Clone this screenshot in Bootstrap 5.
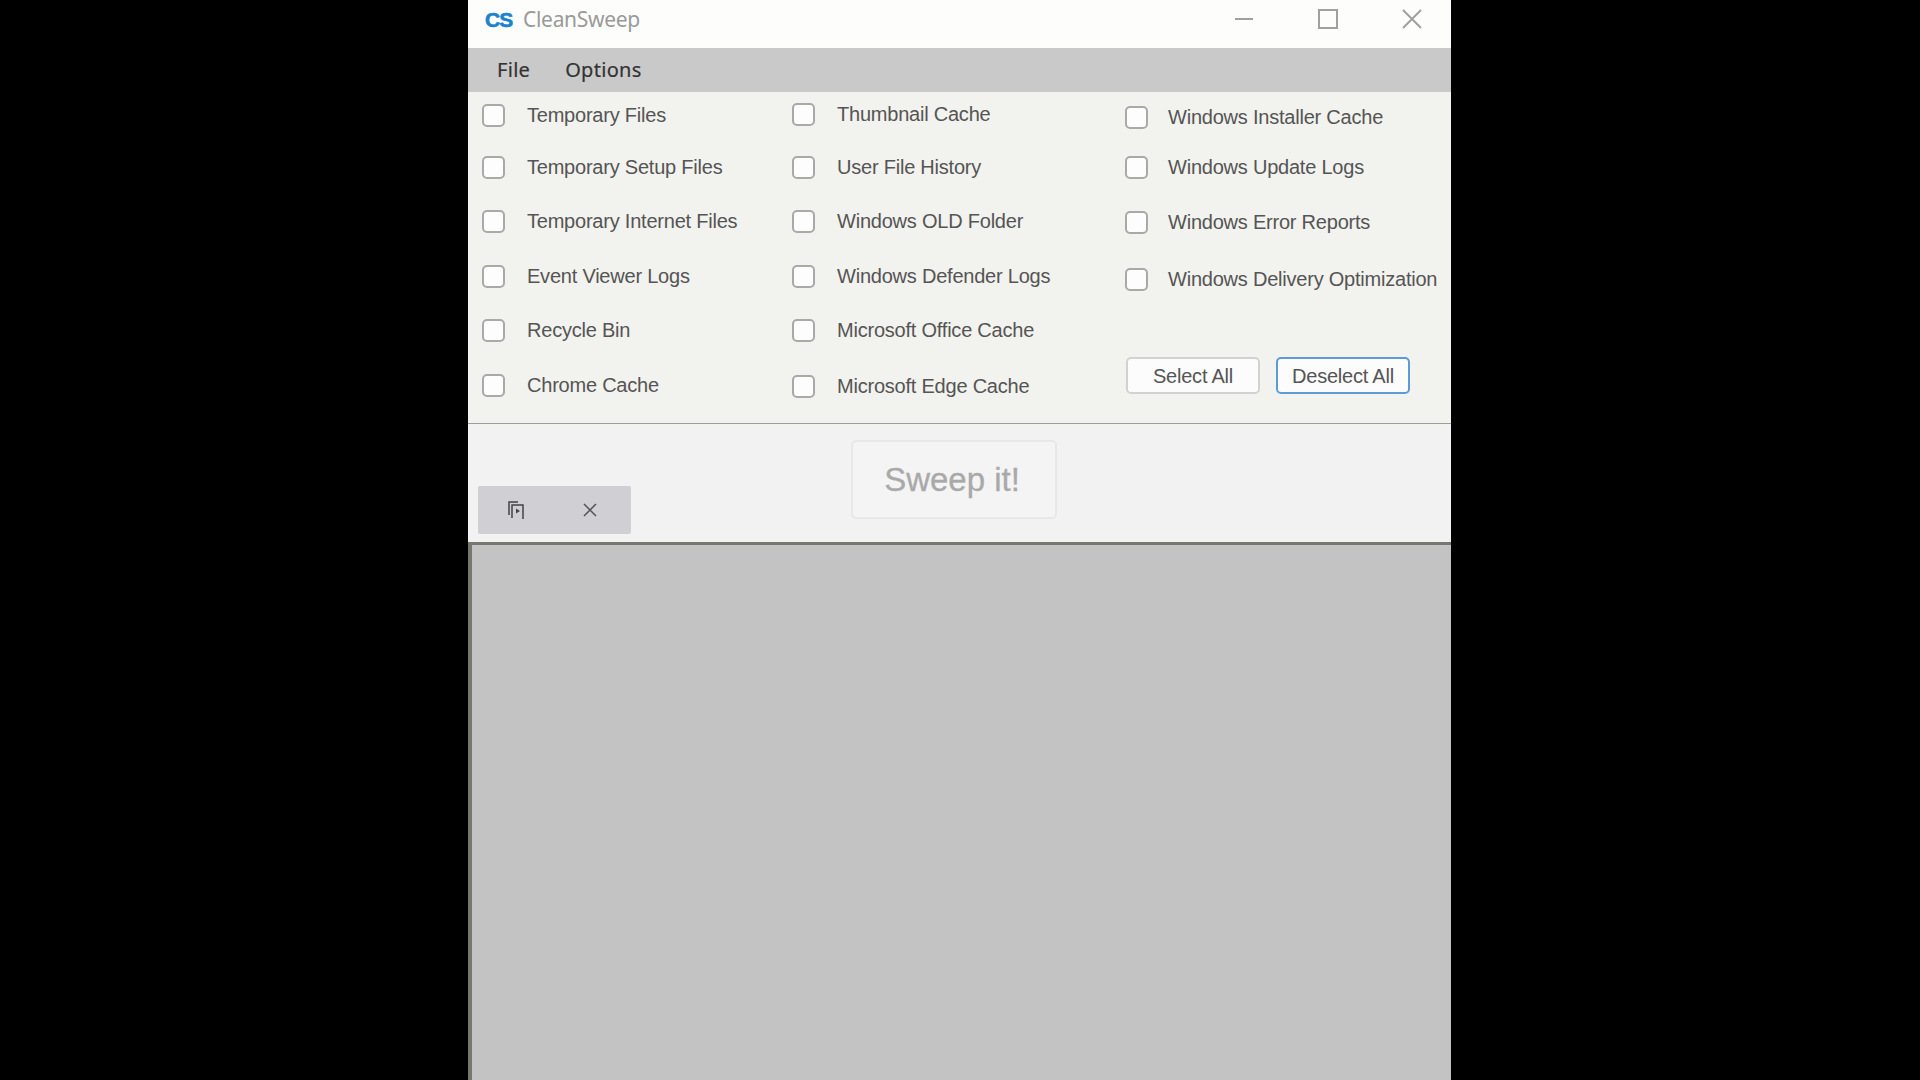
<!DOCTYPE html>
<html lang="en">
  <head>
    <meta charset="UTF-8" />
    <title>CleanSweep</title>
    <link href="https://cdn.jsdelivr.net/npm/bootstrap@5.3.0/dist/css/bootstrap.min.css" rel="stylesheet" />
    <style>
      body { background: #000; height: 1080px; overflow: hidden; font-family: "Liberation Sans", Arial, sans-serif; }
      .app-window { width: 983px; height: 1080px; margin-left: 468px; background: #f2f2ee; }
      .title-strip { height: 48px; padding-bottom: 10px; background: #fdfdfb; }
      .cs-logo { width: 27px; margin-left: 17px; font: 900 21px/1 "Liberation Sans", sans-serif; letter-spacing: -1px; color: #1b82cc; -webkit-text-stroke: .6px #1b82cc; }
      .app-name { margin-left: 11px; font: 21px "Noto Sans", sans-serif; letter-spacing: -.3px; color: #9a9a9a; }
      .win-btns { gap: 64px; padding-right: 29px; }
      .menu-strip { height: 44px; padding-bottom: 2px; background: #c9c9c9; padding-left: 29px; gap: 35px; font: 20px "Noto Sans", sans-serif; letter-spacing: .3px; color: #333; -webkit-text-stroke: .2px #333; }
      .check-panel { height: 332px; border-bottom: 1px solid #9c9c98; }
      .col-first { width: 324px; padding-left: 14px; }
      .col-second { width: 333px; }
      .check-line { height: 24px; margin: 0; padding: 0; gap: 22px; font-size: 20px; letter-spacing: -.22px; color: #555; white-space: nowrap; }
      .check-line .form-check-input { width: 23px; height: 23px; margin: 0; float: none; flex: none; background-color: #fdfdfd; border: 2px solid #a9a9a9; border-radius: 5px; }
      .sp-11 { margin-top: 11px; } .sp-10 { margin-top: 10px; } .sp-13 { margin-top: 13px; }
      .sp-26 { margin-top: 26px; } .sp-28 { margin-top: 28px; } .sp-29 { margin-top: 29px; }
      .sp-30 { margin-top: 30px; } .sp-31 { margin-top: 31px; } .sp-32 { margin-top: 32px; } .sp-33 { margin-top: 33px; }
      .col-third .check-line { gap: 20px; }
      .pick-row { margin: 66px 0 0 1px; gap: 16px; }
      .pick-btn { width: 134px; height: 37px; padding: 0; font-size: 20px; letter-spacing: -.22px; color: #555; background: #fcfcfc; border: 2px solid #d2d2d2; border-radius: 5px; }
      .pick-btn.is-focus { border-color: #5b9bd8; }
      .action-panel { height: 118px; background: #f2f2f2; padding-left: 10px; }
      .tab-chip { width: 153px; height: 48px; margin-top: 62px; background: #cfcfd4; border-radius: 2px; padding-left: 30px; gap: 58px; }
      .btn.sweep-btn, .btn.sweep-btn:disabled { width: 206px; height: 79px; margin: 16px 0 0 220px; padding: 0 4px 0 0; font-size: 33px; color: #a9a9a9; background: #f4f4f4; border: 2px solid #e8e8e8; border-radius: 5px; opacity: 1; -webkit-text-stroke: .3px #a9a9a9; }
      .log-area { background: #c3c3c3; border-top: 3px solid #77776f; border-left: 4px solid #77776f; }
    </style>
  </head>
  <body>
    <div class="app-window d-flex flex-column">
      <!-- title bar -->
      <div class="title-strip d-flex align-items-center">
        <span class="cs-logo">CS</span>
        <span class="app-name flex-grow-1">CleanSweep</span>
        <div class="win-btns d-flex align-items-center">
          <svg width="20" height="20" viewBox="0 0 20 20"><path d="M1 10h18" stroke="#a0a0a0" stroke-width="2" /></svg>
          <svg width="20" height="20" viewBox="0 0 20 20"><rect x="1" y="1" width="18" height="18" fill="none" stroke="#a0a0a0" stroke-width="2" /></svg>
          <svg width="20" height="20" viewBox="0 0 20 20"><path d="M1 1l18 18M19 1L1 19" stroke="#a0a0a0" stroke-width="2" /></svg>
        </div>
      </div>

      <!-- menu -->
      <div class="menu-strip d-flex align-items-center">
        <span>File</span>
        <span>Options</span>
      </div>

      <!-- checkboxes -->
      <div class="check-panel d-flex">
        <div class="col-first d-flex flex-column sp-11">
          <label class="check-line form-check d-flex align-items-center"><input class="form-check-input" type="checkbox" />Temporary Files</label>
          <label class="check-line form-check d-flex align-items-center sp-28"><input class="form-check-input" type="checkbox" />Temporary Setup Files</label>
          <label class="check-line form-check d-flex align-items-center sp-30"><input class="form-check-input" type="checkbox" />Temporary Internet Files</label>
          <label class="check-line form-check d-flex align-items-center sp-31"><input class="form-check-input" type="checkbox" />Event Viewer Logs</label>
          <label class="check-line form-check d-flex align-items-center sp-30"><input class="form-check-input" type="checkbox" />Recycle Bin</label>
          <label class="check-line form-check d-flex align-items-center sp-31"><input class="form-check-input" type="checkbox" />Chrome Cache</label>
        </div>
        <div class="col-second d-flex flex-column sp-10">
          <label class="check-line form-check d-flex align-items-center"><input class="form-check-input" type="checkbox" />Thumbnail Cache</label>
          <label class="check-line form-check d-flex align-items-center sp-29"><input class="form-check-input" type="checkbox" />User File History</label>
          <label class="check-line form-check d-flex align-items-center sp-30"><input class="form-check-input" type="checkbox" />Windows OLD Folder</label>
          <label class="check-line form-check d-flex align-items-center sp-31"><input class="form-check-input" type="checkbox" />Windows Defender Logs</label>
          <label class="check-line form-check d-flex align-items-center sp-30"><input class="form-check-input" type="checkbox" />Microsoft Office Cache</label>
          <label class="check-line form-check d-flex align-items-center sp-32"><input class="form-check-input" type="checkbox" />Microsoft Edge Cache</label>
        </div>
        <div class="col-third d-flex flex-column sp-13">
          <label class="check-line form-check d-flex align-items-center"><input class="form-check-input" type="checkbox" />Windows Installer Cache</label>
          <label class="check-line form-check d-flex align-items-center sp-26"><input class="form-check-input" type="checkbox" />Windows Update Logs</label>
          <label class="check-line form-check d-flex align-items-center sp-31"><input class="form-check-input" type="checkbox" />Windows Error Reports</label>
          <label class="check-line form-check d-flex align-items-center sp-33"><input class="form-check-input" type="checkbox" />Windows Delivery Optimization</label>
          <div class="pick-row d-flex">
            <button class="btn pick-btn" type="button">Select All</button>
            <button class="btn pick-btn is-focus" type="button">Deselect All</button>
          </div>
        </div>
      </div>

      <!-- sweep button and minimised tab -->
      <div class="action-panel d-flex align-items-start">
        <div class="tab-chip d-flex align-items-center">
          <svg width="17" height="19" viewBox="0 0 17 19" fill="none" stroke="#444" stroke-width="1.5">
            <path d="M1 14V1h9" />
            <path d="M4 17V4h11v14" />
            <path d="M8 7.500v5l4-2.500z" fill="#444" stroke="none" />
          </svg>
          <svg width="14" height="14" viewBox="0 0 14 14" stroke="#555" stroke-width="1.5"><path d="M1 1l12 12M13 1L1 13" /></svg>
        </div>
        <button class="btn sweep-btn" type="button" disabled>Sweep it!</button>
      </div>

      <div class="log-area flex-grow-1"></div>
    </div>

    <script src="https://cdn.jsdelivr.net/npm/bootstrap@5.3.0/dist/js/bootstrap.bundle.min.js"></script>
  </body>
</html>
